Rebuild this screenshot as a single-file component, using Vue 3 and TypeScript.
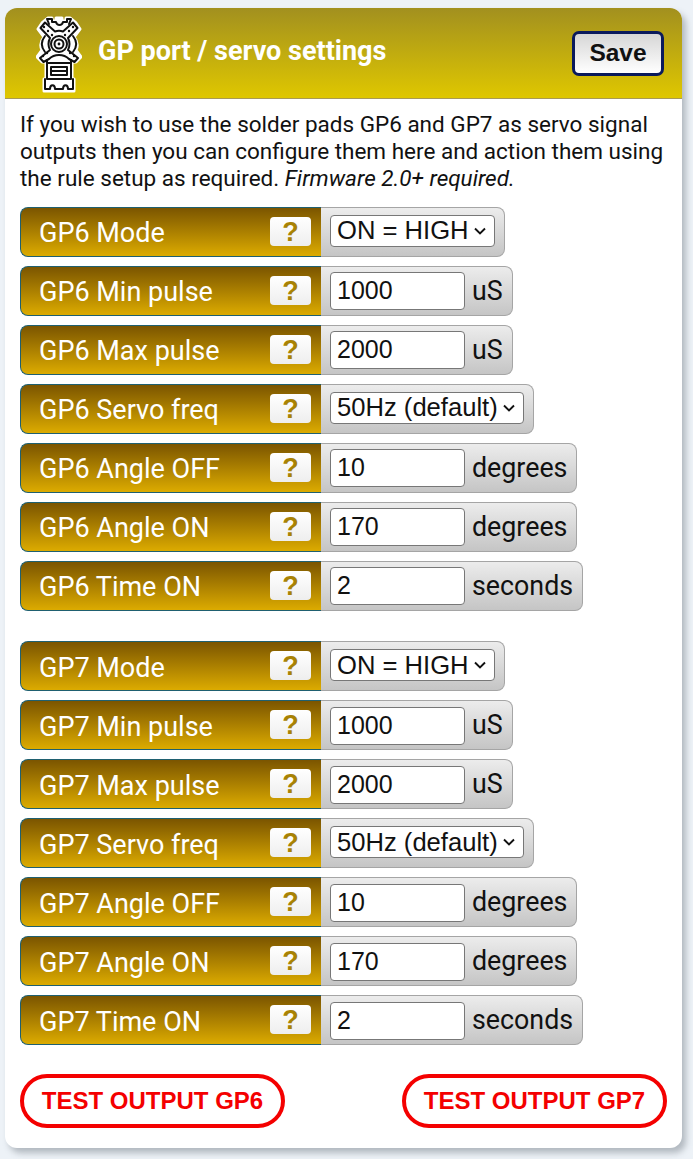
<script setup lang="ts">
interface Row { label: string; kind: 'select' | 'input'; value: string; unit?: string }
const makeRows = (p: string): Row[] => [
  { label: `${p} Mode`, kind: 'select', value: 'ON = HIGH' },
  { label: `${p} Min pulse`, kind: 'input', value: '1000', unit: 'uS' },
  { label: `${p} Max pulse`, kind: 'input', value: '2000', unit: 'uS' },
  { label: `${p} Servo freq`, kind: 'select', value: '50Hz (default)' },
  { label: `${p} Angle OFF`, kind: 'input', value: '10', unit: 'degrees' },
  { label: `${p} Angle ON`, kind: 'input', value: '170', unit: 'degrees' },
  { label: `${p} Time ON`, kind: 'input', value: '2', unit: 'seconds' },
]
const groups = [makeRows('GP6'), makeRows('GP7')]
const dots: [number, number][] = [
  [8, 12], [12, 16], [16, 20], [37, 12], [33, 16], [29, 20],
  [7, 41], [11, 38], [38, 41], [34, 38],
]
</script>

<template>
  <div class="page">
    <section class="card">
      <header class="head">
        <svg class="logo" viewBox="0 0 46 78" width="46" height="78" aria-hidden="true">
          <path class="halo" d="M6 8 L12 3 H16 V6 H20 V3 H26 V6 H30 V3 H34 L40 8 L44 14 L38 22 C42 27 42 31 40 35 L45 42 L40 47 L36 47 V64 H38 V76 H8 V64 H10 V47 L6 47 L1 42 L6 35 C4 31 4 27 8 22 L2 14 Z" />
          <g class="ink">
            <path d="M13 9 L11 4 H16 V7 H20 C21 11 26 11 27 7 H31 V4 H35 L33 9" />
            <path d="M4.5 13 L9 7.5 L19 16.5 C21.5 15.5 24.5 15.5 27 16.5 L37 7.5 L41.5 13 L32 23 C34 27 34 31 32 35 L42 43 L38.5 47 L33 44 C30 41 27 40 23 40 C19 40 16 41 13 44 L7.5 47 L4 43 L14 35 C12 31 12 27 14 23 Z" />
            <path d="M9 21 C5 26 5 32 9 37 M37 21 C41 26 41 32 37 37" />
            <circle cx="23" cy="29" r="8" />
            <circle cx="23" cy="29" r="4.5" />
            <path d="M11 45 V64 H35 V45 M11 48 H35" />
            <path d="M15 52 H31 V60 H15 Z M15 56 H31" />
            <path d="M9 64 V74 H14 C14 69 19 69 19 74 H27 C27 69 32 69 32 74 H37 V64" />
          </g>
          <circle cx="23" cy="29" r="1.4" class="dot" />
          <circle v-for="(d, i) in dots" :key="i" :cx="d[0]" :cy="d[1]" r="1.2" class="dot" />
        </svg>
        <h1 class="title">GP port / servo settings</h1>
        <button class="save" type="button">Save</button>
      </header>

      <div class="body">
        <p class="intro">
          If you wish to use the solder pads GP6 and GP7 as servo signal outputs then you can configure them here and action them using the rule setup as required. <em>Firmware 2.0+ required.</em>
        </p>

        <div v-for="(rows, g) in groups" :key="g" class="group">
          <div v-for="row in rows" :key="row.label" class="row">
            <div class="label">
              <span class="label-text">{{ row.label }}</span>
              <span class="help">?</span>
            </div>
            <div class="value">
              <div v-if="row.kind === 'select'" class="select">
                <span>{{ row.value }}</span>
                <svg class="chev" viewBox="0 0 12 8" width="12" height="8" aria-hidden="true">
                  <path d="M1 1.5l5 5 5-5" />
                </svg>
              </div>
              <template v-else>
                <input class="input" type="text" :value="row.value" />
                <span class="unit">{{ row.unit }}</span>
              </template>
            </div>
          </div>
        </div>

        <div class="actions">
          <button class="test" type="button">TEST OUTPUT GP6</button>
          <button class="test" type="button">TEST OUTPUT GP7</button>
        </div>
      </div>
    </section>
  </div>
</template>

<style scoped>
.page {
  width: 693px;
  height: 1159px;
  box-sizing: border-box;
  padding: 8px 11px 0 5px;
  background: #edf2f7;
  overflow: hidden;
}
.card {
  height: 1140px;
  background: #fff;
  border-radius: 12px;
  box-shadow: 4px 5px 6px rgba(90, 100, 110, 0.4);
  overflow: hidden;
}
.head {
  height: 91px;
  box-sizing: border-box;
  display: flex;
  align-items: center;
  padding: 0 18px 0 31px;
  background: linear-gradient(#a2901f, #dfc700);
  border-bottom: 1px solid #a89a56;
}
.logo { flex: none; margin-top: 2px; }
.halo { fill: #fff; stroke: #fff; stroke-width: 3; stroke-linejoin: round; }
.ink { fill: none; stroke: #111; stroke-width: 2; stroke-linejoin: round; stroke-linecap: round; }
.dot { fill: #111; }
.title {
  margin: 0 0 5px 16px;
  flex: 1;
  font: 700 27px "Roboto", sans-serif;
  color: #fff;
}
.save {
  width: 92px;
  height: 45px;
  border: 3px solid #0a1a5c;
  border-radius: 7px;
  background: linear-gradient(#d6d6d6, #fff);
  font: 700 24.5px "Liberation Sans", sans-serif;
  color: #111;
  padding: 0;
}
.body { padding: 12px 15px 0; }
.intro {
  margin: 0 0 15px;
  font: 400 22.5px/27px "Roboto", sans-serif;
  color: #111;
}
.group { margin-bottom: 30px; }
.group + .group { margin-bottom: 29px; }
.group + .group .label-text { padding-top: 3px; }
.group + .group .select { margin-top: -2px; }
.group + .group .input { margin-top: 1px; }
.row {
  display: flex;
  height: 50px;
  margin-bottom: 9px;
}
.group .row:last-child { margin-bottom: 0; }
.label {
  width: 301px;
  box-sizing: border-box;
  display: flex;
  align-items: center;
  justify-content: space-between;
  padding: 0 10px 0 18px;
  border: 1px solid #1f6070;
  border-right: 0;
  border-radius: 8px 0 0 8px;
  background: linear-gradient(#7b5500, #dcab00);
}
.label-text {
  font: 400 27px "Roboto", sans-serif;
  color: #fff;
  padding-top: 2px;
}
.help {
  width: 41px;
  height: 29px;
  border-radius: 4px;
  background: linear-gradient(#fff, #eeeeee);
  color: #a88204;
  font: 700 27px/30px "Liberation Sans", sans-serif;
  text-align: center;
  margin-top: -2px;
}
.value {
  display: flex;
  align-items: center;
  gap: 7px;
  box-sizing: border-box;
  padding: 0 9px;
  border: 1px solid #a5a5a5;
  border-left: 0;
  border-radius: 0 8px 8px 0;
  background: linear-gradient(#ececec, #c5c5c5);
  font: 400 25.6px "Liberation Sans", sans-serif;
  color: #111;
}
.select {
  display: flex;
  align-items: center;
  justify-content: space-between;
  gap: 5px;
  height: 32px;
  box-sizing: border-box;
  padding: 0 8px 0 6px;
  margin-top: -3px;
  border: 1px solid #777;
  border-radius: 4px;
  background: #fff;
}
.chev { fill: none; stroke: #111; stroke-width: 1.9; }
.input {
  width: 135px;
  height: 38px;
  box-sizing: border-box;
  padding: 0 6px;
  margin: -1px 0 0;
  border: 1px solid #777;
  border-radius: 4px;
  background: #fff;
  font: 400 25px "Liberation Sans", sans-serif;
  color: #111;
}
.unit { font: 400 26.8px "Roboto", sans-serif; }
.actions {
  display: flex;
  justify-content: space-between;
}
.test {
  width: 265px;
  height: 54px;
  border: 4px solid #f40000;
  border-radius: 27px;
  background: #fff;
  padding: 0;
  font: 700 24px "Liberation Sans", sans-serif;
  color: #f40000;
}
</style>
